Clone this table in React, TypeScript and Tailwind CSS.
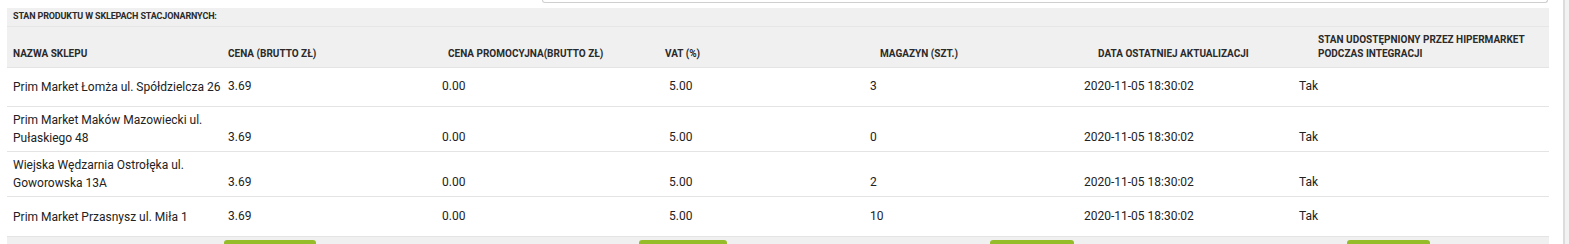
import React from "react";

const rows = [
  { name: "Prim Market Łomża ul. Spółdzielcza 26", mag: "3", h: "h-[39px]", pb: "pb-[11px]", nw: true },
  { name: "Prim Market Maków Mazowiecki ul. Pułaskiego 48", mag: "0", h: "h-[45px]", pb: "pb-[5px]", nw: false },
  { name: "Wiejska Wędzarnia Ostrołęka ul. Goworowska 13A", mag: "2", h: "h-[45px]", pb: "pb-[5px]", nw: false },
  { name: "Prim Market Przasnysz ul. Miła 1", mag: "10", h: "h-[40px]", pb: "pb-[11px]", nw: true },
];

const headers = [
  "NAZWA SKLEPU",
  "CENA (BRUTTO ZŁ)",
  "CENA PROMOCYJNA(BRUTTO ZŁ)",
  "VAT (%)",
  "MAGAZYN (SZT.)",
  "DATA OSTATNIEJ AKTUALIZACJI",
  "STAN UDOSTĘPNIONY PRZEZ HIPERMARKET PODCZAS INTEGRACJI",
];

export default function App() {
  return (
    <div
      className="flex h-[244px] w-[1569px] overflow-hidden bg-white text-[#222]"
      style={{ fontFamily: "Roboto, 'Noto Sans', sans-serif" }}
    >
      <div className="flex w-[1563px] flex-col pl-[7px]">
        <div className="h-[8px] shrink-0">
          <div className="ml-[535px] h-[3px] w-[1006px] rounded-b-[4px] border-x border-b border-[#cfcfcf]" />
        </div>
        <div className="w-[1542px]">
          <div className="flex h-[19px] items-center border-b border-[#e6e6e6] bg-[#f0f0f0] pl-[6px] text-[9px] font-bold tracking-[-0.15px] text-[#2a2a2a]">
            STAN PRODUKTU W SKLEPACH STACJONARNYCH:
          </div>
          <div className="grid h-[41px] grid-cols-[215px_220px_217px_215px_218px_220px_237px] border-b border-[#e4e4e4] bg-[#f0f0f0] text-[10px] font-bold leading-[14px] text-[#2a2a2a]">
            {headers.map((h, i) => (
              <div key={i} className="flex items-end pb-[6px] pl-[6px]">
                <span className={i === 6 ? "max-w-[218px]" : "whitespace-nowrap"}>{h}</span>
              </div>
            ))}
          </div>
          {rows.map((r, i) => (
            <div
              key={i}
              className={`grid ${r.h} grid-cols-[215px_214px_227px_201px_214px_215px_256px] border-b border-[#e4e4e4] text-[12px] leading-[18px]`}
            >
              <div className={`flex items-center pl-[6px] ${r.nw ? "whitespace-nowrap" : ""}`}>{r.name}</div>
              <div className={`flex items-end pl-[6px] ${r.pb}`}>3.69</div>
              <div className={`flex items-end pl-[6px] ${r.pb}`}>0.00</div>
              <div className={`flex items-end pl-[6px] ${r.pb}`}>5.00</div>
              <div className={`flex items-end pl-[6px] ${r.pb}`}>{r.mag}</div>
              <div className={`flex items-end pl-[6px] ${r.pb}`}>2020-11-05 18:30:02</div>
              <div className={`flex items-end pl-[6px] ${r.pb}`}>Tak</div>
            </div>
          ))}
          <div className="flex h-[20px] items-start bg-[#f0f0f0] pt-[3px]">
            <div className="ml-[217px] h-[30px] w-[92px] rounded-[3px] bg-[#95bd2a]" />
            <div className="ml-[323px] h-[30px] w-[88px] rounded-[3px] bg-[#95bd2a]" />
            <div className="ml-[263px] h-[30px] w-[84px] rounded-[3px] bg-[#95bd2a]" />
            <div className="ml-[273px] h-[30px] w-[83px] rounded-[3px] bg-[#95bd2a]" />
          </div>
        </div>
      </div>
      <div className="h-full w-[6px] border-l-2 border-[#dcdcdc] bg-[#f2f2f2]" />
    </div>
  );
}
